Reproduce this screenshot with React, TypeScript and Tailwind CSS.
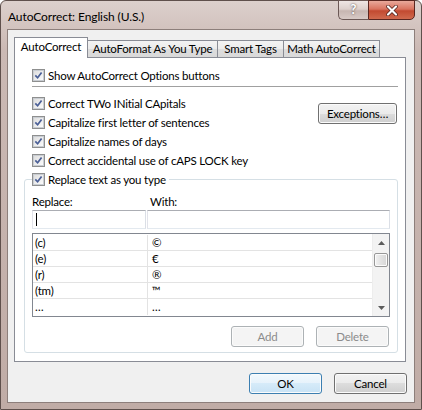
import React from 'react'

const FONT = "font-['Lato','Noto_Sans',sans-serif]"

const ROWS = [
  { from: '(c)', to: '©' },
  { from: '(e)', to: '€' },
  { from: '(r)', to: '®' },
  { from: '(tm)', to: '™' },
  { from: '…', to: '…' },
]

const OPTIONS = [
  'Correct TWo INitial CApitals',
  'Capitalize first letter of sentences',
  'Capitalize names of days',
  'Correct accidental use of cAPS LOCK key',
]

const TAB_OFF = 'bg-[linear-gradient(#f3f3f3_0%,#ebebeb_50%,#dddddd_50%,#d9d9d9_100%)]'

function Check() {
  return (
    <span className="w-[13px] h-[13px] border border-[#8e8f8f] bg-white flex items-center justify-center shrink-0">
      <span className="w-[11px] h-[11px] border border-[#c9cdd2] bg-gradient-to-br from-[#dedede] to-[#fbfbfb] flex items-center justify-center">
        <svg width="9" height="9" viewBox="0 0 9 9">
          <path d="M1.3 4.4 L3.6 6.8 L7.6 1.4" fill="none" stroke="#4a5f97" strokeWidth="1.7" />
        </svg>
      </span>
    </span>
  )
}

function CheckRow({ label }: { label: string }) {
  return (
    <div className="h-[19px] flex items-center gap-[3px] whitespace-nowrap">
      <Check />
      <span>{label}</span>
    </div>
  )
}

function Button({ label, kind = 'normal', w = 'w-[73px]' }: { label: string; kind?: 'normal' | 'default' | 'disabled'; w?: string }) {
  const styles = {
    normal: 'border-[#707070] text-black bg-[linear-gradient(#f2f2f2_0%,#ebebeb_50%,#dddddd_50%,#cfcfcf_100%)]',
    default: 'border-[#3c7fb1] text-black bg-[linear-gradient(#f2f9fd_0%,#e6f2fb_50%,#d6ebf9_50%,#c8e2f5_100%)]',
    disabled: 'border-[#adb2b5] text-[#8b8b8b] bg-[#f4f4f4]',
  }[kind]
  return (
    <div className={`${w} h-[21px] rounded-[3px] border ${styles} shadow-[inset_0_0_0_1px_#fbfbfb] flex items-center justify-center`}>
      {label}
    </div>
  )
}

export default function App() {
  return (
    <div className={`${FONT} text-[11.5px] tracking-[-0.2px] text-black w-[422px] h-[410px] flex flex-col rounded-t-[6px] border border-[#5f504c] bg-[linear-gradient(180deg,#dcd0cc_0%,#cbb9b4_12%,#c0aca6_100%)] px-[6px] pb-[6px]`}>
      {/* title bar */}
      <div className="h-[28px] flex justify-between items-start">
        <span className="pl-[1px] mt-[7px] text-[12px] tracking-[-0.1px]">AutoCorrect: English (U.S.)</span>
        <div className="flex -mt-[1px]">
          <div className="w-[30px] h-[20px] rounded-bl-[5px] border border-[#6b5855] border-r-0 bg-[linear-gradient(#efe6e4_0%,#ddd0cc_45%,#c7b6b1_55%,#d8cac6_100%)] flex items-center justify-center text-white font-bold text-[13px] [text-shadow:0_0_2px_#3a2c2a]">
            ?
          </div>
          <div className="w-[47px] h-[20px] rounded-br-[5px] border border-[#5a2620] bg-[linear-gradient(#e9a99b_0%,#d9735f_45%,#c24a31_55%,#d06a4e_100%)] flex items-center justify-center">
            <svg width="12" height="11" viewBox="0 0 12 11">
              <path d="M2 1.5 L10 9.5 M10 1.5 L2 9.5" stroke="#4a1c16" strokeWidth="3.6" strokeLinecap="round" />
              <path d="M2 1.5 L10 9.5 M10 1.5 L2 9.5" stroke="#ffffff" strokeWidth="2.2" strokeLinecap="round" />
            </svg>
          </div>
        </div>
      </div>

      {/* client area */}
      <div className="flex-1 border border-[#8d7f7b] bg-[#f0f0f0] flex flex-col">
        {/* tabs */}
        <div className="mt-[7px] ml-[6px] h-[21px] -mb-[1px] flex items-start whitespace-nowrap">
          <div className="relative z-10 w-[74px] h-[21px] border border-b-0 border-[#898c95] bg-white flex items-center justify-center pb-[2px]">
            AutoCorrect
          </div>
          <div className={`-ml-[1px] mt-[3px] w-[131px] h-[17px] border border-b-0 border-[#898c95] ${TAB_OFF} flex items-center justify-center`}>
            AutoFormat As You Type
          </div>
          <div className={`-ml-[1px] mt-[3px] w-[67px] h-[17px] border border-b-0 border-[#898c95] ${TAB_OFF} flex items-center justify-center`}>
            Smart Tags
          </div>
          <div className={`-ml-[1px] mt-[3px] w-[97px] h-[17px] border border-b-0 border-[#898c95] ${TAB_OFF} flex items-center justify-center`}>
            Math AutoCorrect
          </div>
        </div>

        {/* tab panel */}
        <div className="ml-[6px] w-[392px] border border-[#898c95] bg-white flex flex-col pb-[8px]">
          <div className="mt-[8px] ml-[17px]">
            <CheckRow label="Show AutoCorrect Options buttons" />
          </div>
          <div className="mt-[1px] ml-[17px] mr-[7px] h-px bg-[#a0a0a0]" />

          <div className="mt-[7px] ml-[17px] flex justify-between">
            <div className="flex flex-col">
              {OPTIONS.map(o => (
                <CheckRow key={o} label={o} />
              ))}
            </div>
            <div className="mt-[9px] mr-[8px]">
              <Button label="Exceptions…" w="w-[79px]" />
            </div>
          </div>

          <fieldset className="ml-[9px] mr-[7px] border border-[#d5dfe5] rounded-[3px] px-[7px] pb-[5px]">
            <legend className="pr-[3px]">
              <CheckRow label="Replace text as you type" />
            </legend>

            <div className="mt-[5px] h-[16px] flex items-center">
              <span className="w-[115px]">Replace:</span>
              <span className="pl-[3px]">With:</span>
            </div>

            <div className="h-[19px] flex gap-[1px]">
              <div className="w-[114px] border border-[#abadb3] border-l-[#e2e3ea] border-b-[#e3e9ef] border-r-[#dbdfe6] bg-white flex items-center">
                <span className="ml-[3px] w-px h-[13px] bg-black" />
              </div>
              <div className="flex-1 border border-[#abadb3] border-l-[#e2e3ea] border-b-[#e3e9ef] border-r-[#dbdfe6] bg-white" />
            </div>

            <div className="mt-[4px] h-[84px] border border-[#828790] bg-white flex">
              <div className="flex-1 pt-[1px] flex flex-col">
                {ROWS.map(r => (
                  <div key={r.from} className="h-[16px] flex border-b border-[#e3e3e3] last:border-b-0">
                    <span className="w-[115px] pl-[2px] border-r border-[#e3e3e3] flex items-center">{r.from}</span>
                    <span className="pl-[4px] flex items-center">{r.to}</span>
                  </div>
                ))}
              </div>
              {/* scrollbar */}
              <div className="w-[17px] bg-[#f3f3f3] border-l border-[#ededed] flex flex-col">
                <div className="h-[17px] flex items-center justify-center">
                  <svg width="7" height="4" viewBox="0 0 7 4">
                    <path d="M0 4 L3.5 0 L7 4 Z" fill="#5c5c5c" />
                  </svg>
                </div>
                <div className="mt-[2px] mx-[1px] h-[14px] rounded-[2px] border border-[#979797] bg-[linear-gradient(90deg,#f2f2f2,#e2e2e2_50%,#d6d6d6)] shadow-[inset_0_0_0_1px_#fbfbfb]" />
                <div className="flex-1" />
                <div className="h-[17px] flex items-center justify-center">
                  <svg width="7" height="4" viewBox="0 0 7 4">
                    <path d="M0 0 L7 0 L3.5 4 Z" fill="#5c5c5c" />
                  </svg>
                </div>
              </div>
            </div>

            <div className="mt-[9px] pr-[1px] flex justify-end gap-[12px]">
              <Button label="Add" kind="disabled" />
              <Button label="Delete" kind="disabled" />
            </div>
          </fieldset>
        </div>

        {/* dialog buttons */}
        <div className="mt-[11px] pr-[7px] flex justify-end gap-[12px]">
          <Button label="OK" kind="default" />
          <Button label="Cancel" />
        </div>
      </div>
    </div>
  )
}
